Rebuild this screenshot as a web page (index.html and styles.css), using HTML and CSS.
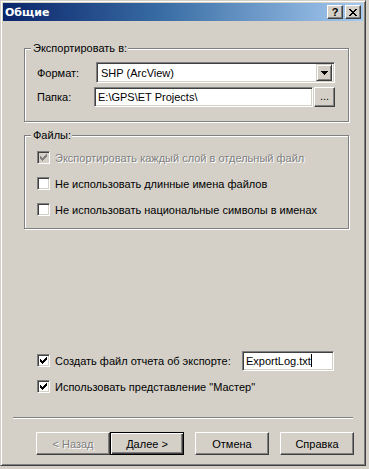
FILE: index.html
```html
<!DOCTYPE html>
<html lang="ru">
<head>
<meta charset="utf-8">
<title>Общие</title>
<link rel="stylesheet" href="styles.css">
</head>
<body>
<div class="window">
  <div class="titlebar">
    <span class="title">Общие</span>
    <div class="tb-buttons">
      <span class="tbtn help">?</span>
      <span class="tbtn close">
        <svg width="8" height="7" viewBox="0 0 8 7" shape-rendering="crispEdges"><path d="M0 0h2v1h-2z M6 0h2v1h-2z M1 1h2v1h-2z M5 1h2v1h-2z M2 2h4v1h-4z M3 3h2v1h-2z M2 4h4v1h-4z M1 5h2v1h-2z M5 5h2v1h-2z M0 6h2v1h-2z M6 6h2v1h-2z" fill="#000"/></svg>
      </span>
    </div>
  </div>

  <div class="page">
    <div class="group g1">
      <span class="legend">Экспортировать в:</span>
      <div class="row row-format">
        <span class="lbl">Формат:</span>
        <div class="combo">
          <span class="combo-text">SHP (ArcView)</span>
          <span class="drop">
            <svg width="7" height="4" viewBox="0 0 7 4" shape-rendering="crispEdges"><path d="M0 0h7v1h-7z M1 1h5v1h-5z M2 2h3v1h-3z M3 3h1v1h-1z" fill="#000"/></svg>
          </span>
        </div>
      </div>
      <div class="row row-folder">
        <span class="lbl">Папка:</span>
        <div class="field folder">E:\GPS\ET Projects\</div>
        <span class="btn browse">...</span>
      </div>
    </div>

    <div class="group g2">
      <span class="legend">Файлы:</span>
      <div class="check disabled">
        <span class="box checked"><svg width="7" height="7" viewBox="0 0 7 7" shape-rendering="crispEdges"><path d="M6 0h1v1h-1z M5 1h2v1h-2z M0 2h1v1h-1z M4 2h3v1h-3z M0 3h2v1h-2z M3 3h3v1h-3z M0 4h5v1h-5z M1 5h3v1h-3z M2 6h1v1h-1z" fill="#808080"/></svg></span>
        <span class="ctext">Экспортировать каждый слой в отдельный файл</span>
      </div>
      <div class="check">
        <span class="box"></span>
        <span class="ctext">Не использовать длинные имена файлов</span>
      </div>
      <div class="check">
        <span class="box"></span>
        <span class="ctext">Не использовать национальные символы в именах</span>
      </div>
    </div>

    <div class="bottom-opts">
      <div class="check report">
        <span class="box checked"><svg width="7" height="7" viewBox="0 0 7 7" shape-rendering="crispEdges"><path d="M6 0h1v1h-1z M5 1h2v1h-2z M0 2h1v1h-1z M4 2h3v1h-3z M0 3h2v1h-2z M3 3h3v1h-3z M0 4h5v1h-5z M1 5h3v1h-3z M2 6h1v1h-1z" fill="#000"/></svg></span>
        <span class="ctext">Создать файл отчета об экспорте:</span>
        <div class="field logname">ExportLog.txt<span class="caret"></span></div>
      </div>
      <div class="check">
        <span class="box checked"><svg width="7" height="7" viewBox="0 0 7 7" shape-rendering="crispEdges"><path d="M6 0h1v1h-1z M5 1h2v1h-2z M0 2h1v1h-1z M4 2h3v1h-3z M0 3h2v1h-2z M3 3h3v1h-3z M0 4h5v1h-5z M1 5h3v1h-3z M2 6h1v1h-1z" fill="#000"/></svg></span>
        <span class="ctext">Использовать представление "Мастер"</span>
      </div>
    </div>
  </div>

  <div class="sep"></div>

  <div class="buttons">
    <span class="btn wbtn disabled-btn">&lt; Назад</span>
    <span class="btn wbtn default">Далее &gt;</span>
    <span class="btn wbtn gap">Отмена</span>
    <span class="btn wbtn gap">Справка</span>
  </div>
</div>
</body>
</html>
```

FILE: styles.css
```css
html, body {
  margin: 0;
  padding: 0;
  background: #d4d0c8;
}

body {
  font-family: "Liberation Sans", Arial, sans-serif;
  font-size: 11px;
  color: #000;
}

.window {
  width: 366px;
  height: 466px;
  box-sizing: border-box;
  background: #d4d0c8;
  border-style: solid;
  border-width: 1px;
  border-color: #d4d0c8 #404040 #404040 #d4d0c8;
  box-shadow: inset 1px 1px #fff, inset -1px -1px #808080;
  padding: 2px;
  display: flex;
  flex-direction: column;
}

.titlebar {
  height: 18px;
  background: linear-gradient(to right, #0a246a 0%, #3a6ea5 45%, #a6caf0 100%);
  display: flex;
  align-items: center;
  padding: 0 2px 0 2px;
  flex-shrink: 0;
}

.title {
  color: #fff;
  font-weight: bold;
  font-size: 11px;
  font-family: "DejaVu Sans", "Liberation Sans", sans-serif;
  letter-spacing: 0;
  flex: 1;
}

.tb-buttons {
  display: flex;
  gap: 2px;
}

.tbtn {
  width: 16px;
  height: 14px;
  box-sizing: border-box;
  background: #d4d0c8;
  border: 1px solid;
  border-color: #fff #404040 #404040 #fff;
  box-shadow: inset -1px -1px #808080;
  display: flex;
  align-items: center;
  justify-content: center;
  font-weight: bold;
  font-size: 11px;
  line-height: 1;
}

.page {
  flex: 1;
  display: flex;
  flex-direction: column;
  padding: 0 0 0 21px;
}

.group {
  position: relative;
  width: 325px;
  box-sizing: border-box;
  border: 1px solid #808080;
  box-shadow: inset 1px 1px #fff, 1px 1px #fff;
}

.legend {
  position: absolute;
  top: -8px;
  left: 6px;
  padding: 0 1px 0 2px;
  background: #d4d0c8;
  line-height: 14px;
}

.g1 {
  margin-top: 27px;
  height: 74px;
  padding: 13px 13px 0 12px;
}

.row {
  display: flex;
  align-items: center;
}

.lbl {
  width: 59px;
  flex-shrink: 0;
}

.combo {
  width: 239px;
  height: 21px;
  box-sizing: border-box;
  background: #fff;
  border: 1px solid;
  border-color: #808080 #fff #fff #808080;
  box-shadow: inset 1px 1px #404040, inset -1px -1px #d4d0c8;
  display: flex;
  align-items: center;
  padding: 2px 2px 2px 4px;
}

.combo-text {
  flex: 1;
}

.drop {
  width: 16px;
  height: 17px;
  box-sizing: border-box;
  background: #d4d0c8;
  border: 1px solid;
  border-color: #d4d0c8 #404040 #404040 #d4d0c8;
  box-shadow: inset 1px 1px #fff, inset -1px -1px #808080;
  display: flex;
  align-items: center;
  justify-content: center;
}

.row-folder {
  margin-top: 4px;
  margin-left: 0;
}

.row-folder .lbl {
  width: 57px;
}

.field {
  box-sizing: border-box;
  background: #fff;
  border: 1px solid;
  border-color: #808080 #fff #fff #808080;
  box-shadow: inset 1px 1px #404040, inset -1px -1px #d4d0c8;
  display: flex;
  align-items: center;
  padding: 0 3px;
}

.folder {
  width: 219px;
  height: 20px;
}

.btn {
  box-sizing: border-box;
  background: #d4d0c8;
  border: 1px solid;
  border-color: #fff #404040 #404040 #fff;
  box-shadow: inset -1px -1px #808080;
  display: flex;
  align-items: center;
  justify-content: center;
}

.browse {
  width: 21px;
  height: 20px;
  margin-left: 1px;
  padding-bottom: 2px;
}

.g2 {
  margin-top: 13px;
  height: 94px;
  padding: 15px 12px 0 12px;
  display: flex;
  flex-direction: column;
  gap: 13px;
}

.check {
  display: flex;
  align-items: center;
  height: 13px;
}

.box {
  width: 13px;
  height: 13px;
  box-sizing: border-box;
  background: #fff;
  border: 1px solid;
  border-color: #808080 #fff #fff #808080;
  box-shadow: inset 1px 1px #404040, inset -1px -1px #d4d0c8;
  flex-shrink: 0;
  display: flex;
  padding: 2px 0 0 2px;
  margin-right: 5px;
}

.disabled .box {
  background: #d4d0c8;
}

.disabled .ctext {
  color: #808080;
  text-shadow: 1px 1px #fff;
}

.bottom-opts {
  margin-top: auto;
  padding-left: 13px;
  padding-bottom: 24px;
  display: flex;
  flex-direction: column;
  gap: 13px;
}

.report .ctext {
  width: 187px;
  flex-shrink: 0;
}

.logname {
  width: 92px;
  height: 20px;
  padding-left: 3px;
}

.caret {
  display: inline-block;
  width: 1px;
  height: 13px;
  background: #000;
  margin-left: 0;
}

.sep {
  height: 1px;
  margin: 0 10px 0 10px;
  border-top: 1px solid #808080;
  border-bottom: 1px solid #fff;
  height: 0;
}

.buttons {
  display: flex;
  padding: 13px 0 8px 33px;
}

.wbtn {
  width: 74px;
  height: 23px;
}

.gap {
  margin-left: 11px;
}

.disabled-btn {
  color: #808080;
  text-shadow: 1px 1px #fff;
}

.default {
  border: 1px solid #000;
  box-shadow: inset 1px 1px #fff, inset -1px -1px #404040, inset -2px -2px #808080;
}
```
